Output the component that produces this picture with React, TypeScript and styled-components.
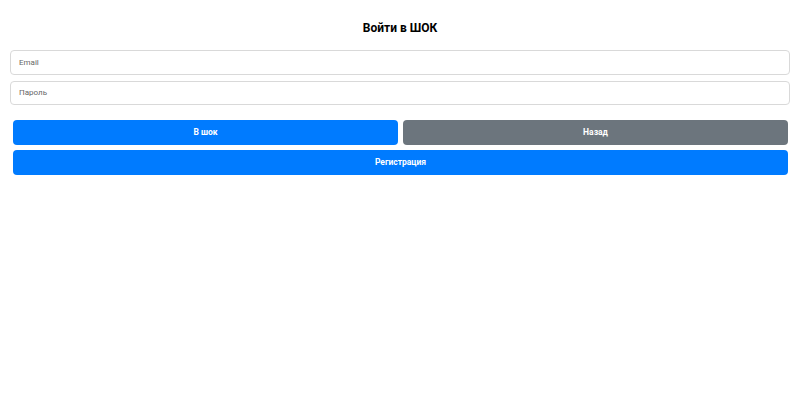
import React from "react";
import styled, { createGlobalStyle } from "styled-components";

const Global = createGlobalStyle`
  html, body { margin: 0; padding: 0; background: #fff; }
  body { font-family: Roboto, "Liberation Sans", Arial, sans-serif; }
  * { box-sizing: border-box; }
`;

const Page = styled.div`
  padding: 18px 10px 10px;
  display: flex;
  flex-direction: column;
`;

const Title = styled.h1`
  margin: 0 0 12px;
  height: 20px;
  line-height: 20px;
  text-align: center;
  font-size: 12px;
  font-weight: 700;
  color: #000;
`;

const Fields = styled.div`
  display: flex;
  flex-direction: column;
  gap: 6px;
`;

const Input = styled.input`
  height: 24.5px;
  width: 100%;
  border: 1px solid #d9d9d9;
  border-radius: 4px;
  padding: 0 8px;
  font-family: Roboto, "Liberation Sans", Arial, sans-serif;
  font-size: 8px;
  color: #333;
  outline: none;
  &::placeholder { color: #666; }
`;

const Actions = styled.div`
  margin: 14.5px 2px 0 3px;
  display: flex;
  flex-direction: column;
  gap: 5px;
`;

const Row = styled.div`
  display: flex;
  gap: 5px;
`;

const Button = styled.button<{ $variant?: "primary" | "secondary" }>`
  flex: 1;
  height: 25px;
  border: none;
  border-radius: 4px;
  background: ${(p) => (p.$variant === "secondary" ? "#6c757d" : "#007bff")};
  color: #fff;
  font-family: Roboto, "Liberation Sans", Arial, sans-serif;
  font-size: 8.5px;
  font-weight: 700;
  cursor: pointer;
  padding: 0;
`;

export default function App() {
  return (
    <>
      <Global />
      <Page>
        <Title>Войти в ШОК</Title>
        <Fields>
          <Input type="email" placeholder="Email" />
          <Input type="password" placeholder="Пароль" />
        </Fields>
        <Actions>
          <Row>
            <Button $variant="primary">В шок</Button>
            <Button $variant="secondary">Назад</Button>
          </Row>
          <Row>
            <Button $variant="primary">Регистрация</Button>
          </Row>
        </Actions>
      </Page>
    </>
  );
}
